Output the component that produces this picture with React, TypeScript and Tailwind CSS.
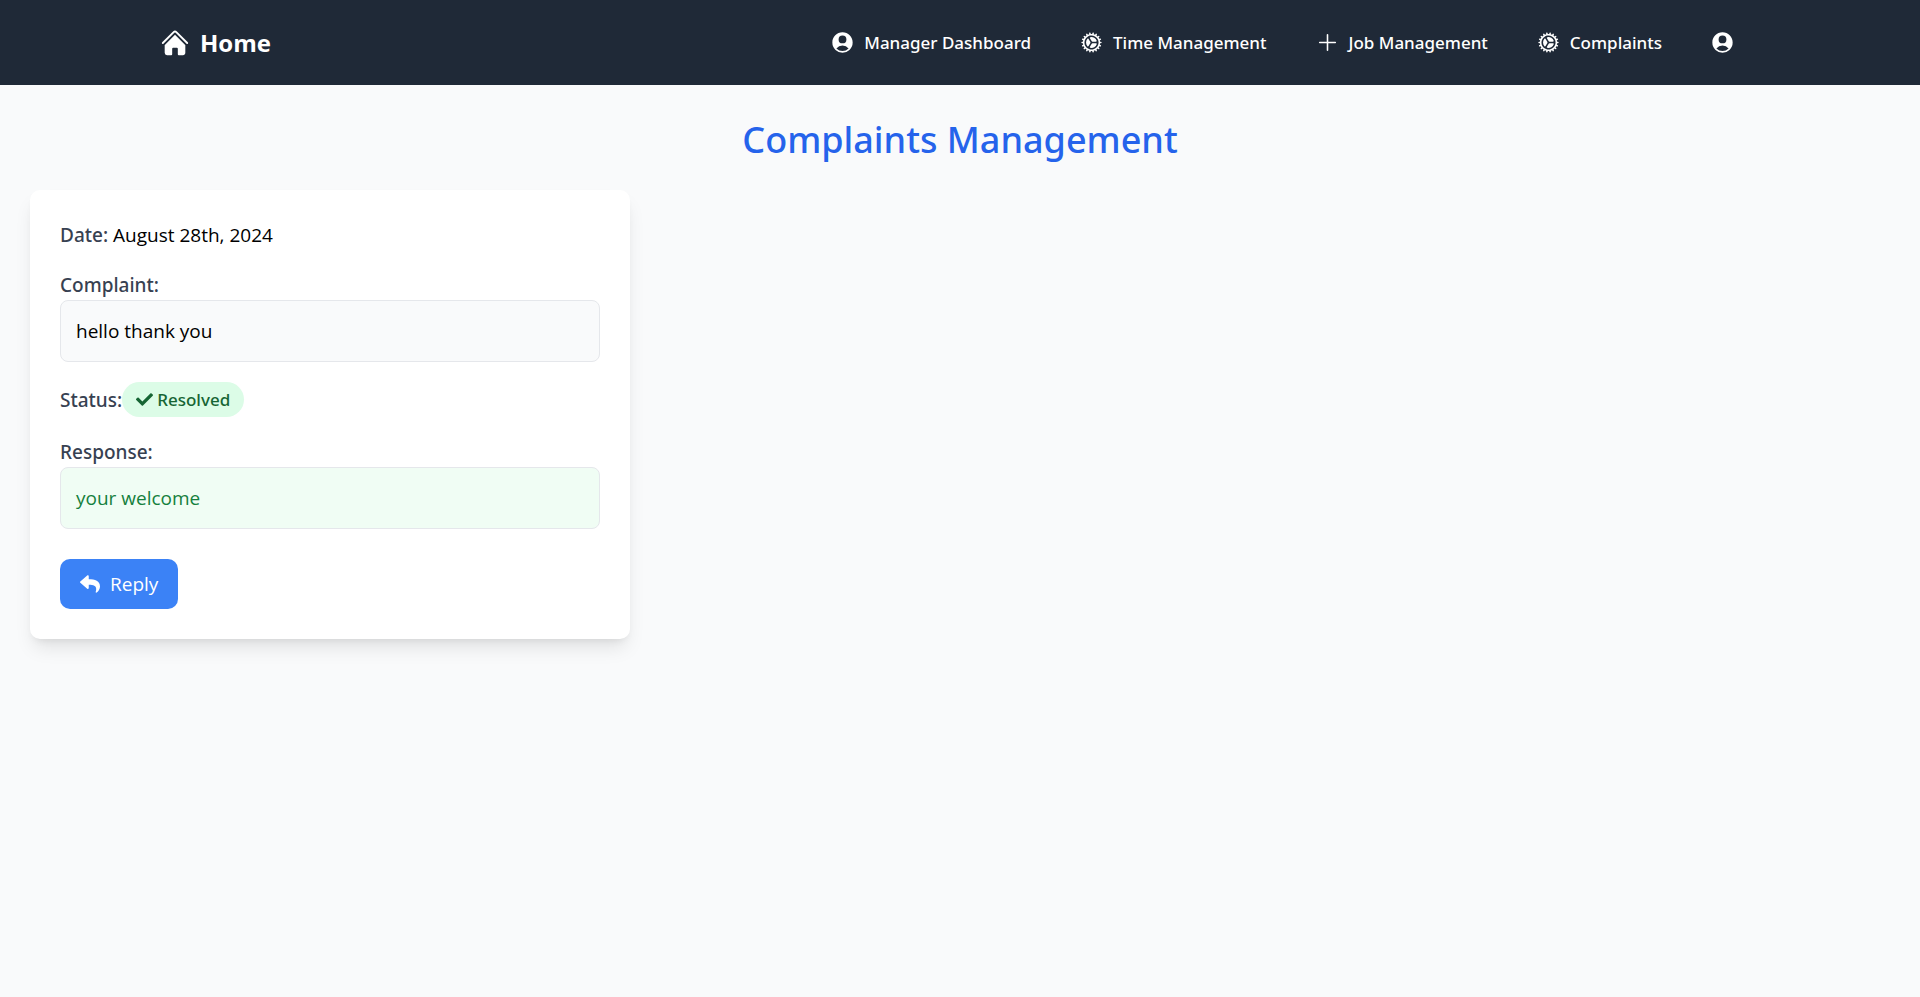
import type { ReactNode } from "react";
import { FaCheck, FaReply } from "react-icons/fa";
import { HiCog, HiHome, HiOutlinePlus, HiUserCircle } from "react-icons/hi2";

type NavLink = { label: string; href: string; icon: ReactNode };

const navLinks: NavLink[] = [
  { label: "Manager Dashboard", href: "#dashboard", icon: <HiUserCircle className="size-[25px]" /> },
  { label: "Time Management", href: "#time", icon: <HiCog className="size-[25px]" /> },
  { label: "Job Management", href: "#jobs", icon: <HiOutlinePlus className="size-[25px]" /> },
  { label: "Complaints", href: "#complaints", icon: <HiCog className="size-[25px]" /> },
];

// Noto Sans has a true medium weight, which Open Sans lacks here.
const medium = "font-['Noto_Sans','Open_Sans',sans-serif] font-medium";
const label = `${medium} text-[#374151]`;

function Header() {
  return (
    <header className="bg-[#1f2937] text-white">
      <nav className="mx-auto flex h-[85px] max-w-[1600px] items-center justify-between pr-[25px]">
        <a href="#home" className="flex items-center gap-[10px] text-[24px] font-bold">
          <HiHome className="size-[30px]" />
          <span>Home</span>
        </a>
        <ul className={`${medium} flex items-center gap-12 text-[17px]`}>
          {navLinks.map((link) => (
            <li key={link.label}>
              <a href={link.href} className="flex items-center gap-[9px]">
                {link.icon}
                <span>{link.label}</span>
              </a>
            </li>
          ))}
          <li>
            <a href="#profile" aria-label="Profile" className="block">
              <HiUserCircle className="size-[25px]" />
            </a>
          </li>
        </ul>
      </nav>
    </header>
  );
}

function ComplaintCard() {
  return (
    <article className="flex flex-col items-stretch rounded-[10px] bg-white p-[30px] text-[19px] leading-[30px] text-black shadow-[0_12px_19px_-4px_rgb(0_0_0/0.1),0_5px_8px_-5px_rgb(0_0_0/0.1)]">
      <p className="mb-5">
        <span className={label}>Date:</span> August 28th, 2024
      </p>
      <div className="mb-5">
        <h2 className={label}>Complaint:</h2>
        <p className="rounded-lg border border-[#e5e7eb] bg-[#f9fafb] p-[15px]">hello thank you</p>
      </div>
      <div className="mb-5 flex items-center">
        <span className={label}>Status:</span>
        <span
          className={`${medium} flex items-center gap-1 rounded-full bg-[#dcfce7] px-[14px] py-[5px] text-[17px] leading-[25px] text-[#166534]`}
        >
          <FaCheck />
          Resolved
        </span>
      </div>
      <div className="mb-[30px]">
        <h2 className={label}>Response:</h2>
        <p className="rounded-lg border border-[#e5e7eb] bg-[#f0fdf4] p-[15px] text-[#15803d]">your welcome</p>
      </div>
      <button
        type="button"
        className="flex cursor-pointer items-center gap-[10px] self-start rounded-[10px] bg-[#3b82f6] px-5 py-[10px] text-white"
      >
        <FaReply className="size-5" />
        Reply
      </button>
    </article>
  );
}

export default function App() {
  return (
    <div className="min-h-screen bg-[#f9fafb] font-['Open_Sans','Noto_Sans',sans-serif]">
      <Header />
      <main className="px-[30px] py-8">
        <h1 className={`${medium} mb-7 text-center text-[36px] leading-[45px] text-[#2563eb]`}>
          Complaints Management
        </h1>
        <div className="grid grid-cols-1 gap-[30px] md:grid-cols-2 lg:grid-cols-3">
          <ComplaintCard />
        </div>
      </main>
    </div>
  );
}
